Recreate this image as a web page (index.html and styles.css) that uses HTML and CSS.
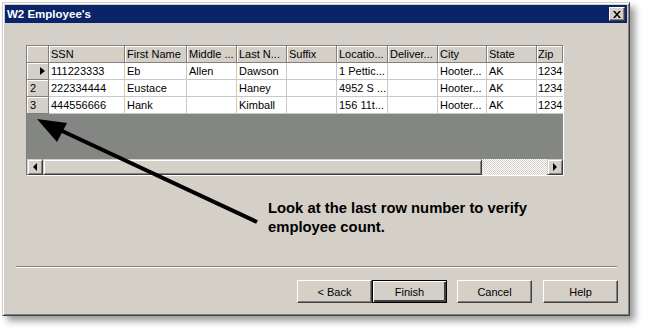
FILE: index.html
```html
<!DOCTYPE html>
<html lang="en">
<head>
<meta charset="UTF-8" />
<title>W2 Employee's</title>
<link rel="stylesheet" href="styles.css">
</head>
<body>

<!-- DIALOG WINDOW -->
<div class="window">
  <div class="titlebar">
    <span class="title">W2 Employee's</span>
    <button class="close-btn" aria-label="Close">
      <svg width="8" height="7" viewBox="0 0 8 7"><path d="M0 0h2l2 2.5L6 0h2L5 3.5 8 7H6L4 4.5 2 7H0l3-3.5z" fill="#000"/></svg>
    </button>
  </div>

  <div class="content">
    <!-- DATA GRID -->
    <div class="grid">
      <div class="grid-rows">
        <div class="row header">
          <div class="cell rh"></div>
          <div class="cell c-ssn">SSN</div>
          <div class="cell c-first">First Name</div>
          <div class="cell">Middle ...</div>
          <div class="cell">Last N...</div>
          <div class="cell">Suffix</div>
          <div class="cell c-loc">Locatio...</div>
          <div class="cell">Deliver...</div>
          <div class="cell c-city">City</div>
          <div class="cell">State</div>
          <div class="cell c-zip">Zip</div>
        </div>
        <div class="row">
          <div class="cell rh"><span class="current"></span></div>
          <div class="cell c-ssn">111223333</div>
          <div class="cell c-first">Eb</div>
          <div class="cell">Allen</div>
          <div class="cell">Dawson</div>
          <div class="cell"></div>
          <div class="cell c-loc">1 Pettic...</div>
          <div class="cell"></div>
          <div class="cell c-city">Hooter...</div>
          <div class="cell">AK</div>
          <div class="cell c-zip">1234</div>
        </div>
        <div class="row">
          <div class="cell rh">2</div>
          <div class="cell c-ssn">222334444</div>
          <div class="cell c-first">Eustace</div>
          <div class="cell"></div>
          <div class="cell">Haney</div>
          <div class="cell"></div>
          <div class="cell c-loc">4952 S ...</div>
          <div class="cell"></div>
          <div class="cell c-city">Hooter...</div>
          <div class="cell">AK</div>
          <div class="cell c-zip">1234</div>
        </div>
        <div class="row">
          <div class="cell rh">3</div>
          <div class="cell c-ssn">444556666</div>
          <div class="cell c-first">Hank</div>
          <div class="cell"></div>
          <div class="cell">Kimball</div>
          <div class="cell"></div>
          <div class="cell c-loc">156 11t...</div>
          <div class="cell"></div>
          <div class="cell c-city">Hooter...</div>
          <div class="cell">AK</div>
          <div class="cell c-zip">1234</div>
        </div>
      </div>
      <div class="grid-empty"></div>
      <div class="hscroll">
        <div class="sb-btn"><span class="tri-left"></span></div>
        <div class="sb-thumb"></div>
        <div class="sb-track"></div>
        <div class="sb-btn"><span class="tri-right"></span></div>
      </div>
    </div>

    <p class="note">Look at the last row number to verify<br />employee count.</p>
  </div>

  <div class="footer">
    <div class="separator"></div>
    <div class="buttons">
      <button class="btn">&lt; Back</button>
      <button class="btn default">Finish</button>
      <button class="btn cancel">Cancel</button>
      <button class="btn help">Help</button>
    </div>
  </div>
</div>

<!-- Callout arrow -->
<svg class="arrow" width="646" height="330" viewBox="0 0 646 330">
  <line x1="60" y1="130" x2="257" y2="222" stroke="#000" stroke-width="4" />
  <polygon points="37,119 67,123 57,142" fill="#000" />
</svg>

</body>
</html>
```

FILE: styles.css
```css
/* Base */
* {
  box-sizing: border-box;
}
body {
  margin: 0;
  position: relative;
  width: 646px;
  height: 330px;
  background: #fff;
  font-family: "Liberation Sans", Arial, sans-serif;
  font-size: 11px;
  color: #000;
  overflow: hidden;
}

/* Window frame */
.window {
  margin: 2px 0 0 2px;
  width: 628px;
  height: 314px;
  background: #d4d0c8;
  border: 1px solid;
  border-color: #d4d0c8 #404040 #404040 #d4d0c8;
  box-shadow: inset 1px 1px #fff, inset -1px -1px #808080, 5px 5px 7px rgba(0,0,0,0.4);
  padding: 2px;
  display: flex;
  flex-direction: column;
}

.titlebar {
  height: 18px;
  background: #0a246a;
  display: flex;
  align-items: center;
  justify-content: space-between;
  padding: 0 2px 0 2px;
}
.title {
  color: #fff;
  font-weight: 700;
  font-size: 11.5px;
}
.close-btn {
  width: 16px;
  height: 14px;
  padding: 0;
  border: 1px solid;
  border-color: #fff #404040 #404040 #fff;
  box-shadow: inset -1px -1px #808080;
  background: #d4d0c8;
  display: flex;
  align-items: center;
  justify-content: center;
}

.content {
  padding: 22px 0 0 21px;
}

/* Data grid */
.grid {
  width: 538px;
  border: 1px solid;
  border-color: #808080 #fff #fff #808080;
  overflow: hidden;
}
.grid-rows {
  width: 560px;
}
.row {
  display: flex;
  height: 17px;
  background: #fff;
}
.cell {
  width: 50px;
  flex: none;
  height: 17px;
  line-height: 16px;
  padding-left: 2px;
  border-right: 1px solid #c8c8c8;
  border-bottom: 1px solid #c8c8c8;
  white-space: nowrap;
  overflow: hidden;
}
.c-ssn { width: 76px; }
.c-first { width: 62px; }
.c-loc { width: 51px; }
.c-city { width: 49px; }
.c-zip { width: 26px; padding-left: 1px; border-right: 0; }

.row.header .cell,
.cell.rh {
  background: #d4d0c8;
  border-right: 1px solid #808080;
  border-bottom: 1px solid #808080;
  box-shadow: inset 1px 1px #fff;
}
.cell.rh {
  width: 22px;
  padding-left: 3px;
  display: flex;
  align-items: center;
}
.current {
  margin-left: 10px;
  width: 0;
  height: 0;
  border-left: 5px solid #000;
  border-top: 4px solid transparent;
  border-bottom: 4px solid transparent;
}

.grid-empty {
  height: 45px;
  background: #848684;
}

/* Horizontal scrollbar */
.hscroll {
  display: flex;
  height: 16px;
}
.sb-btn,
.sb-thumb {
  background: #d4d0c8;
  border: 1px solid;
  border-color: #d4d0c8 #404040 #404040 #d4d0c8;
  box-shadow: inset 1px 1px #fff, inset -1px -1px #808080;
}
.sb-btn {
  width: 16px;
  flex: none;
  display: flex;
  align-items: center;
  justify-content: center;
}
.sb-thumb {
  width: 439px;
  flex: none;
}
.sb-track {
  flex: 1;
  background-color: #fff;
  background-image: conic-gradient(#d4d0c8 25%, #fff 0 50%, #d4d0c8 0 75%, #fff 0);
  background-size: 2px 2px;
}
.tri-left {
  width: 0;
  height: 0;
  border-right: 4px solid #000;
  border-top: 4px solid transparent;
  border-bottom: 4px solid transparent;
}
.tri-right {
  width: 0;
  height: 0;
  border-left: 4px solid #000;
  border-top: 4px solid transparent;
  border-bottom: 4px solid transparent;
}

/* Annotation */
.note {
  margin: 23px 0 0 242px;
  font-size: 14.8px;
  line-height: 19px;
  font-weight: 700;
}

/* Footer */
.footer {
  margin-top: auto;
  padding-bottom: 10px;
}
.separator {
  margin: 0 10px 0 11px;
  height: 2px;
  border-top: 1px solid #808080;
  border-bottom: 1px solid #fff;
}
.buttons {
  display: flex;
  justify-content: flex-end;
  margin-top: 12px;
  padding-right: 9px;
}
.btn {
  width: 75px;
  height: 23px;
  padding: 0;
  font-family: "Liberation Sans", Arial, sans-serif;
  font-size: 11px;
  color: #000;
  background: #d4d0c8;
  border: 1px solid;
  border-color: #fff #404040 #404040 #fff;
  box-shadow: inset -1px -1px #808080;
}
.btn.default {
  border: 1px solid #000;
  box-shadow: inset 1px 1px #fff, inset -2px -2px #404040, inset -1px -1px #808080;
}
.btn.cancel {
  margin-left: 10px;
}
.btn.help {
  margin-left: 11px;
}

/* Callout arrow over the dialog */
.arrow {
  position: absolute;
  left: 0;
  top: 0;
  pointer-events: none;
}
```
